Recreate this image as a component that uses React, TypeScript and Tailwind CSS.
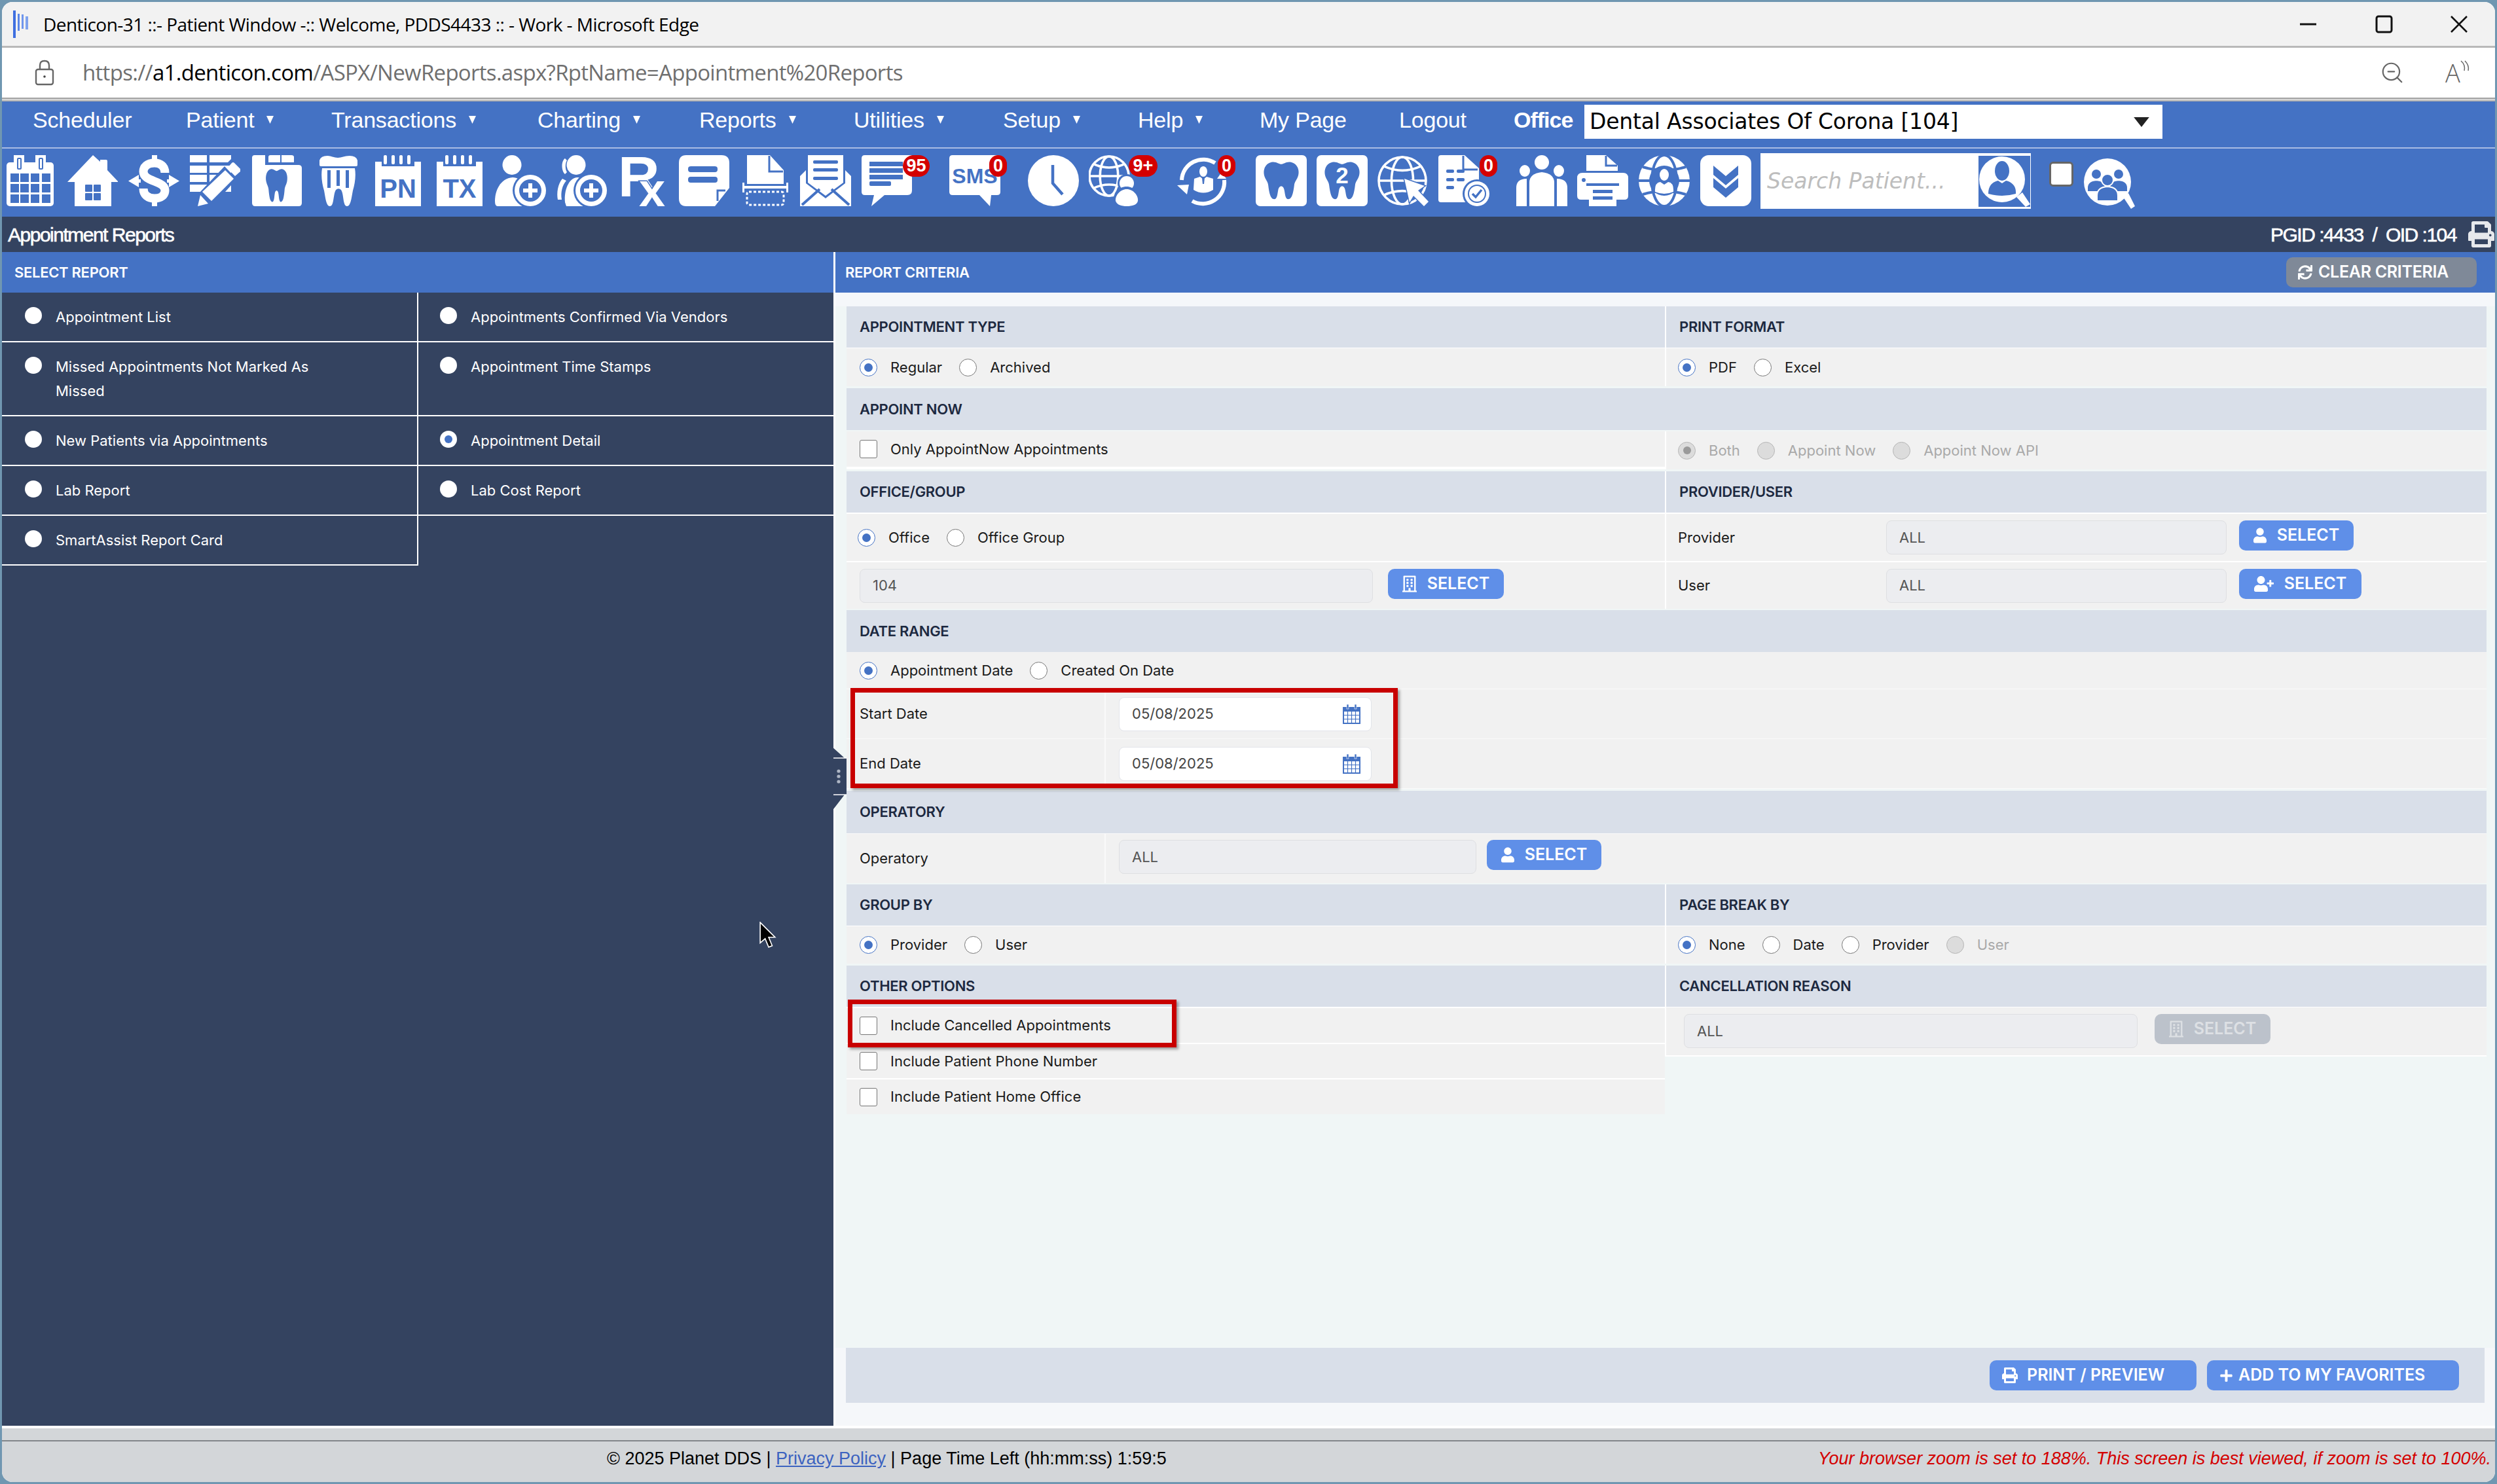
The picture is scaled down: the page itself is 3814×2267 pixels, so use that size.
import type { ReactNode } from "react";
import { FaPlus, FaPrint, FaRegBuilding, FaSync, FaUser, FaUserPlus } from "react-icons/fa";
import { ZoomOut } from "lucide-react";

const BLUE = "#4472c4";

const TOOTH =
  "M25 3C36 0 44 8 50 8C56 8 64 0 75 3C92 7 97 24 93 38C90 48 84 52 83 62C81 78 78 97 68 97C60 97 60 85 58 75C57 68 54 64 50 64C46 64 43 68 42 75C40 85 40 97 32 97C22 97 19 78 17 62C16 52 10 48 7 38C3 24 8 7 25 3Z";

function Ico({ children, className = "" }: { children: ReactNode; className?: string }) {
  return (
    <svg viewBox="0 0 78 78" fill="#fff" className={`w-[78px] h-[78px] ${className}`}>
      {children}
    </svg>
  );
}

function Globe({ cx, cy, r }: { cx: number; cy: number; r: number }) {
  return (
    <g fill="none" stroke="#fff" strokeWidth={3.6}>
      <circle cx={cx} cy={cy} r={r} />
      <ellipse cx={cx} cy={cy} rx={r * 0.46} ry={r} />
      <path d={`M${cx - r} ${cy}H${cx + r}`} />
      <path d={`M${cx - r * 0.8} ${cy - r * 0.62}Q${cx} ${cy - r * 0.25} ${cx + r * 0.8} ${cy - r * 0.62}`} />
      <path d={`M${cx - r * 0.8} ${cy + r * 0.62}Q${cx} ${cy + r * 0.25} ${cx + r * 0.8} ${cy + r * 0.62}`} />
    </g>
  );
}

function CalendarIcon() {
  const cols = [9, 24, 40, 57];
  const rows = [28, 44, 60];
  return (
    <Ico>
      <rect x="3" y="11" width="72" height="67" rx="5" />
      <rect x="14" y="0" width="16" height="15" />
      <rect x="47" y="0" width="16" height="15" />
      <rect x="19" y="4" width="7" height="18" rx="2" fill={BLUE} />
      <rect x="21" y="6" width="3" height="14" fill="#fff" />
      <rect x="52" y="4" width="7" height="18" rx="2" fill={BLUE} />
      <rect x="54" y="6" width="3" height="14" fill="#fff" />
      {rows.map((y) => cols.map((x) => <rect key={`${x}-${y}`} x={x} y={y} width="13" height="13" fill={BLUE} />))}
    </Ico>
  );
}

function HomeIcon() {
  return (
    <Ico>
      <path d="M40 0L51 10V7Q51 7 53 7H60Q62 7 62 9V23L79 41H68V78H12V41H1Z" />
      <g fill={BLUE}>
        <rect x="28" y="45" width="11" height="11" rx="1" />
        <rect x="41" y="45" width="11" height="11" rx="1" />
        <rect x="28" y="58" width="11" height="11" rx="1" />
        <rect x="41" y="58" width="11" height="11" rx="1" />
      </g>
    </Ico>
  );
}

function DollarIcon() {
  return (
    <Ico>
      <rect x="36" y="0" width="8" height="12" />
      <rect x="36" y="66" width="8" height="12" />
      <path
        d="M56 27C56 17 49 12 40 12C29 12 23 18 23 25C23 33 30 36 40 40C50 44 56 47 56 54C56 61 50 66 40 66C30 66 23 61 23 51"
        fill="none"
        stroke="#fff"
        strokeWidth={13}
      />
      <path d="M0 39.5L16 30V37H19V42H16V49Z" />
      <path d="M78 39.5L62 30V37H59V42H62V49Z" />
    </Ico>
  );
}

function LedgerIcon() {
  return (
    <Ico>
      <rect x="1" y="0" width="26" height="11" />
      <rect x="1" y="16" width="26" height="11" />
      <rect x="1" y="30" width="26" height="11" />
      <rect x="1" y="45" width="26" height="11" />
      <path d="M31 0H64V6L59 11H31Z" />
      <rect x="31" y="16" width="33" height="11" />
      <rect x="31" y="30" width="33" height="11" />
      <path d="M55 56L64 46V56Z" />
      <path d="M10 78L15 58L54 17L72 36L34 75Z" fill={BLUE} />
      <path d="M20 56L55 23L68 36L34 70Z" />
      <path d="M17 61L29 74L13 78Z" />
      <path d="M58 20L65 12Q67 10 69 12L78 21Q80 23 78 25L70 32Z" />
    </Ico>
  );
}

function ChartToothIcon() {
  return (
    <Ico>
      <path d="M6 0H22V15H73Q78 15 78 20V73Q78 78 73 78H7Q2 78 2 73V4Q2 0 6 0Z" />
      <path d="M30 0H45V11H27V3Q27 0 30 0Z" />
      <path d="M47 0H62Q66 0 66 3V11H47Z" />
      <path d={TOOTH} fill={BLUE} transform="translate(21 20) scale(.37 .53)" />
    </Ico>
  );
}

function RootCanalIcon() {
  return (
    <Ico>
      <path d="M12 8Q14 1 24 1C30 1 34 4 40 4C46 4 50 1 58 1Q68 1 70 8V15Q70 17 68 17H14Q12 17 12 15Z" />
      <path d="M16 20H66C68 32 66 44 63 54C61 64 60 78 54 78C48 78 49 62 46 55C44 50 38 50 36 55C33 62 34 78 28 78C22 78 21 64 19 54C16 44 14 32 16 20Z" />
      <rect x="24" y="23" width="5" height="27" fill={BLUE} />
      <rect x="38" y="23" width="5" height="24" fill={BLUE} />
      <rect x="52" y="23" width="5" height="27" fill={BLUE} />
    </Ico>
  );
}

function NotepadIcon({ label }: { label: string }) {
  return (
    <Ico>
      <path d="M7 10H74V78H4V10Z" />
      <rect x="14" y="0" width="50" height="17" fill={BLUE} />
      {[17, 29, 41, 53].map((x) => (
        <rect key={x} x={x} y="0" width="5" height="14" rx="2" />
      ))}
      <text x="39" y="65" textAnchor="middle" fontFamily="Liberation Sans" fontWeight="700" fontSize="40" fill={BLUE}>
        {label}
      </text>
    </Ico>
  );
}

function AddPatientIcon({ pair = false }: { pair?: boolean }) {
  return (
    <Ico>
      {pair && <path d="M14 5C8 9 8 24 14 29L17 26C14 22 14 12 17 8Z" />}
      <ellipse cx={pair ? 31 : 26} cy="15" rx="14.5" ry="15" />
      <path d={pair ? "M10 36C3 44 1 58 3 68H9C7 56 10 46 16 39Z" : "M0 70C0 52 10 35 27 34C34 34 40 38 44 44L44 78H4Q0 78 0 70Z"} />
      {pair && <path d="M14 72C12 54 20 34 33 34C40 34 44 38 46 44V78H16Z" />}
      <circle cx="54" cy="54" r="27" fill={BLUE} />
      <circle cx="54" cy="54" r="24" />
      <circle cx="54" cy="54" r="17" fill={BLUE} />
      <rect x="51" y="43" width="6" height="22" />
      <rect x="43" y="51" width="22" height="6" />
    </Ico>
  );
}

function RxIcon() {
  return (
    <Ico>
      <text x="1" y="63" fontFamily="Liberation Sans" fontWeight="700" fontSize="88" fill="#fff">
        R
      </text>
      <text
        x="33"
        y="78"
        fontFamily="Liberation Sans"
        fontWeight="700"
        fontSize="72"
        fill="#fff"
        stroke={BLUE}
        strokeWidth="3"
        paintOrder="stroke"
      >
        x
      </text>
    </Ico>
  );
}

function NoteIcon() {
  return (
    <Ico>
      <path d="M12 0H66Q78 0 78 12V50L56 78H12Q1 78 1 66V12Q1 0 12 0Z" />
      <rect x="15" y="17" width="45" height="9" rx="4" fill={BLUE} />
      <rect x="15" y="33" width="45" height="9" rx="4" fill={BLUE} />
      <path d="M72 54H60V70" fill="none" stroke={BLUE} strokeWidth="3" />
    </Ico>
  );
}

function PrintPreviewIcon() {
  return (
    <Ico>
      <path d="M12 0H47L68 23V44H12Z" />
      <path d="M46 1V25H67" fill="none" stroke={BLUE} strokeWidth="3" />
      <rect x="5" y="47" width="70" height="4" />
      <rect x="5" y="42" width="3" height="15" />
      <rect x="72" y="42" width="3" height="15" />
      <rect x="12" y="56" width="56" height="20" rx="3" fill="none" stroke="#fff" strokeWidth="3" strokeDasharray="4 3" />
    </Ico>
  );
}

function MailIcon() {
  return (
    <Ico>
      <path d="M12 0H66V42L39 62L12 42Z" />
      <rect x="20" y="8" width="38" height="5" rx="2" fill={BLUE} />
      <rect x="20" y="20" width="38" height="5" rx="2" fill={BLUE} />
      <rect x="20" y="33" width="38" height="5" rx="2" fill={BLUE} />
      <path d="M0 32L9 23V43L39 66L69 43V23L78 32V78H0Z" />
      <path d="M3 76L30 52M75 76L48 52" stroke={BLUE} strokeWidth="4" fill="none" />
    </Ico>
  );
}

function ChatIcon() {
  return (
    <Ico>
      <path d="M6 0H78V54Q78 61 71 61H36L16 78L20 61H6Q1 61 1 56V5Q1 0 6 0Z" />
      <rect x="13" y="10" width="51" height="7" fill={BLUE} />
      <rect x="13" y="20" width="51" height="7" fill={BLUE} />
      <rect x="13" y="30" width="51" height="7" fill={BLUE} />
      <rect x="13" y="40" width="33" height="7" rx="2" fill={BLUE} />
    </Ico>
  );
}

function SmsIcon() {
  return (
    <Ico>
      <path d="M5 0H73Q78 0 78 5V56Q78 61 73 61H64L62 78L46 61H5Q0 61 0 56V5Q0 0 5 0Z" />
      <text x="39" y="43" textAnchor="middle" fontFamily="Liberation Sans" fontWeight="700" fontSize="32" fill={BLUE}>
        SMS
      </text>
    </Ico>
  );
}

function ClockIcon() {
  return (
    <Ico>
      <circle cx="39" cy="39" r="39" />
      <path d="M38 15V43L53 60" fill="none" stroke={BLUE} strokeWidth="4.5" />
    </Ico>
  );
}

function GlobePersonIcon() {
  return (
    <Ico>
      <Globe cx={31} cy={32} r={30} />
      <circle cx="58" cy="43" r="14" fill={BLUE} />
      <circle cx="58" cy="43" r="11" />
      <path d="M58 48C44 48 36 60 38 72Q42 81 58 78Q74 80 77 70C79 60 70 48 58 48Z" fill={BLUE} />
      <path d="M58 52C48 52 40 62 41 70C43 76 50 78 58 78C66 78 74 76 75 70C76 62 68 52 58 52Z" />
    </Ico>
  );
}

function CycleIcon() {
  return (
    <Ico>
      <g fill="none" stroke="#fff" strokeWidth="6">
        <path d="M58 12A33 33 0 0 0 7 38" />
        <path d="M23 70A33 33 0 0 0 72 38" />
      </g>
      <path d="M0 46L18 45L15 60Z" />
      <path d="M61 36H75L68 26Z" />
      <ellipse cx="40" cy="25" rx="6" ry="8" />
      <path d="M26 36L35 33L40 37L45 33L55 36V53Q40 62 25 53Z" />
      <path d="M38 35H42L41 44H39Z" fill={BLUE} />
    </Ico>
  );
}

function ToothSquareIcon({ number }: { number?: string }) {
  return (
    <Ico>
      <rect x="0" y="0" width="78" height="78" rx="7" />
      <path d={TOOTH} fill={BLUE} transform="translate(9 9) scale(.6 .6)" />
      {number && (
        <text x="39" y="43" textAnchor="middle" fontFamily="Liberation Sans" fontWeight="700" fontSize="35" fill="#fff">
          {number}
        </text>
      )}
    </Ico>
  );
}

function GlobeCursorIcon() {
  return (
    <Ico>
      <Globe cx={38} cy={39} r={36} />
      <path
        d="M41 36L72 47L62 54L78 71L71 78L55 62L49 72Z"
        fill="#fff"
        stroke={BLUE}
        strokeWidth="3"
        paintOrder="stroke"
      />
    </Ico>
  );
}

function DocCheckIcon() {
  return (
    <Ico>
      <path d="M4 0H40L62 20V72H4Q0 72 0 68V4Q0 0 4 0Z" />
      <path d="M38 1V22H60" fill="none" stroke={BLUE} strokeWidth="3" />
      <g fill={BLUE}>
        <rect x="12" y="22" width="12" height="5" rx="2" />
        <rect x="28" y="22" width="12" height="5" rx="2" />
        <rect x="12" y="35" width="12" height="5" rx="2" />
        <rect x="28" y="35" width="12" height="5" rx="2" />
        <rect x="12" y="47" width="12" height="5" rx="2" />
      </g>
      <circle cx="59" cy="59" r="22" fill={BLUE} />
      <circle cx="59" cy="59" r="19" />
      <circle cx="59" cy="59" r="14" fill={BLUE} />
      <circle cx="59" cy="59" r="12" />
      <path d="M52 59L57 64L66 53" fill="none" stroke={BLUE} strokeWidth="3.5" />
    </Ico>
  );
}

function PeopleIcon() {
  return (
    <Ico>
      <ellipse cx="39" cy="11" rx="11" ry="11" />
      <ellipse cx="13" cy="24" rx="8" ry="9" />
      <ellipse cx="65" cy="24" rx="8" ry="9" />
      <path d="M20 42Q20 28 39 26Q58 28 58 42V78H20Z" />
      <path d="M16 36Q0 36 0 50V78H16Z" />
      <path d="M62 36Q78 36 78 50V78H62Z" />
    </Ico>
  );
}

function PrinterIcon() {
  return (
    <Ico>
      <path d="M14 0H44L62 16V24H14Z" />
      <path d="M44 1V16H61" fill="none" stroke={BLUE} strokeWidth="3" />
      <path d="M8 27H70Q78 27 78 35V62Q78 68 72 68H60V50H18V68H6Q0 68 0 62V35Q0 27 8 27Z" />
      <circle cx="10" cy="38" r="3" fill={BLUE} />
      <path d="M18 47H60V78H18Z" />
      <rect x="14" y="43" width="50" height="4" fill={BLUE} />
      <rect x="24" y="53" width="30" height="5" fill={BLUE} />
      <rect x="24" y="63" width="30" height="5" fill={BLUE} />
    </Ico>
  );
}

function GlobeBadgeIcon() {
  return (
    <Ico>
      <circle cx="39" cy="39" r="39" />
      <g fill="none" stroke={BLUE} strokeWidth="4">
        <ellipse cx="39" cy="39" rx="19" ry="39" />
        <path d="M0 39H78M6 18Q39 28 72 18M6 60Q39 50 72 60" />
      </g>
      <circle cx="39" cy="39" r="23" fill={BLUE} />
      <ellipse cx="39" cy="30" rx="7" ry="9" />
      <path d="M25 56Q24 42 33 41L39 45L45 41Q54 42 53 56Q39 62 25 56Z" />
    </Ico>
  );
}

function ChevronsIcon() {
  return (
    <svg viewBox="0 0 78 78" className="w-[78px] h-[78px]">
      <rect x="0" y="0" width="78" height="78" rx="13" fill="#fff" />
      <path d="M20 16L39 32L58 16V30L39 46L20 30ZM20 35L39 51L58 35V49L39 65L20 49Z" fill={BLUE} />
    </svg>
  );
}

function SearchPersonIcon() {
  return (
    <svg viewBox="0 0 78 78" className="w-[78px] h-[78px]" fill="#fff">
      <path d="M57 63L66 56L78 74L71 78Z" />
      <circle cx="35" cy="36" r="35" />
      <ellipse cx="35" cy="23" rx="11" ry="15" fill={BLUE} />
      <path d="M14 58C14 45 21 40 29 38L35 42L41 38C50 40 57 46 56 58Q35 64 14 58Z" fill={BLUE} />
    </svg>
  );
}

function SearchGroupIcon() {
  return (
    <svg viewBox="0 0 78 78" className="w-[78px] h-[78px]" fill="#fff">
      <path d="M60 60L68 54L78 74L72 78Z" />
      <circle cx="36" cy="37" r="36" />
      <g fill={BLUE} stroke="#fff" strokeWidth="2">
        <circle cx="19" cy="25" r="8" />
        <circle cx="53" cy="25" r="8" />
        <path d="M5 46Q5 35 19 34Q33 35 33 46V52H5Z" />
        <path d="M39 46Q39 35 53 34Q67 35 67 46V52H39Z" />
        <circle cx="36" cy="34" r="9" />
        <path d="M20 58Q20 45 36 44Q52 45 52 58V66H20Z" />
      </g>
    </svg>
  );
}

function ToolSlot({
  children,
  className = "",
  badge,
  badgeClass = "",
}: {
  children: ReactNode;
  className?: string;
  badge?: string;
  badgeClass?: string;
}) {
  return (
    <div className={`relative w-[78px] h-[78px] shrink-0 ${className}`}>
      {children}
      {badge && (
        <span
          className={`absolute top-0 h-[33px] rounded-full bg-[#d40000] text-white font-bold text-[27px] leading-[33px] text-center font-['Liberation_Sans',sans-serif] ${badgeClass}`}
        >
          {badge}
        </span>
      )}
    </div>
  );
}

function Caret() {
  return (
    <svg viewBox="0 0 11 12" className="w-[11px] h-[12px] ml-[19px]">
      <path d="M0 0H11L5.5 12Z" fill="#fff" />
    </svg>
  );
}

const navItems = [
  { label: "Scheduler", width: "w-[234px]" },
  { label: "Patient", width: "w-[222px]", caret: true },
  { label: "Transactions", width: "w-[315px]", caret: true },
  { label: "Charting", width: "w-[247px]", caret: true },
  { label: "Reports", width: "w-[236px]", caret: true },
  { label: "Utilities", width: "w-[228px]", caret: true },
  { label: "Setup", width: "w-[206px]", caret: true },
  { label: "Help", width: "w-[186px]", caret: true },
  { label: "My Page", width: "w-[213px]" },
  { label: "Logout", width: "w-[175px]" },
];

function SectionHead({ title, className = "" }: { title?: string; className?: string }) {
  return (
    <div
      className={`flex items-center pl-[20px] bg-[#d9dfe9] text-[#1d2940] text-[22px] font-semibold tracking-[-0.3px] ${className}`}
    >
      {title}
    </div>
  );
}

function Radio({ checked, disabled }: { checked?: boolean; disabled?: boolean }) {
  if (disabled) {
    return (
      <span className="flex items-center justify-center w-[27px] h-[27px] shrink-0 rounded-full bg-[#dcdcdc] border border-[#b5b5b5]">
        {checked && <span className="w-[12px] h-[12px] rounded-full bg-[#9a9a9a]" />}
      </span>
    );
  }
  return (
    <span
      className={`flex items-center justify-center w-[27px] h-[27px] shrink-0 rounded-full bg-white border ${
        checked ? "border-[#4472c4]" : "border-[#767676]"
      }`}
    >
      {checked && <span className="w-[13px] h-[13px] rounded-full bg-[#4472c4]" />}
    </span>
  );
}

function RadioOpt({
  label,
  checked,
  disabled,
  gap = "mr-[26px]",
}: {
  label: string;
  checked?: boolean;
  disabled?: boolean;
  gap?: string;
}) {
  return (
    <span className={`flex items-center ${gap}`}>
      <Radio checked={checked} disabled={disabled} />
      <span className={`ml-[20px] ${disabled ? "text-[#a9a9a9]" : "text-[#1a1a1a]"}`}>{label}</span>
    </span>
  );
}

function Check({ label }: { label: string }) {
  return (
    <span className="flex items-center">
      <span className="w-[27px] h-[28px] shrink-0 rounded-[3px] bg-white border border-[#767676]" />
      <span className="ml-[20px] text-[#1a1a1a]">{label}</span>
    </span>
  );
}

function ReadOnlyBox({ value, className = "" }: { value: string; className?: string }) {
  return (
    <div
      className={`flex items-center pl-[19px] rounded-[8px] bg-[#ecedf0] border border-[#dedfe2] text-[#555] ${className}`}
    >
      {value}
    </div>
  );
}

function SelectBtn({
  icon,
  className = "",
  disabled,
}: {
  icon: ReactNode;
  className?: string;
  disabled?: boolean;
}) {
  return (
    <button
      className={`flex items-center justify-center gap-[16px] h-[46px] rounded-[10px] font-semibold text-[25px] ${
        disabled ? "bg-[#bcc2cb] text-[#dde0e4]" : "bg-[#5f8fe8] text-white"
      } ${className}`}
    >
      {icon}
      SELECT
    </button>
  );
}

function SmallCalendar() {
  return (
    <svg viewBox="0 0 29 30" className="w-[29px] h-[30px] shrink-0">
      <path d="M1 4H28V30H1Z" fill="#4472c4" />
      <rect x="7" y="0" width="3" height="7" fill="#4472c4" stroke="#fff" strokeWidth=".6" />
      <rect x="19" y="0" width="3" height="7" fill="#4472c4" stroke="#fff" strokeWidth=".6" />
      <path d="M3 11H26V28H3Z" fill="#fff" />
      <path d="M8.5 11V28M14.5 11V28M20.5 11V28M3 16.5H26M3 22.5H26" stroke="#4472c4" strokeWidth="1.2" />
    </svg>
  );
}

function DateRow({ label, className = "" }: { label: string; className?: string }) {
  return (
    <div className={`flex h-[76px] bg-[#f1f1f1] border-b border-[#fafafa] ${className}`}>
      <div className="flex items-center pl-[20px] w-[396px] border-r-2 border-[#fafafa] text-[#1a1a1a]">{label}</div>
      <div className="flex items-center pl-[20px]">
        <div className="flex items-center justify-between w-[386px] h-[52px] pl-[19px] pr-[15px] rounded-[8px] bg-white border border-[#e2e4ea] text-[#444]">
          05/08/2025
          <SmallCalendar />
        </div>
      </div>
    </div>
  );
}

const reports = [
  [
    { label: "Appointment List" },
    { label: "Appointments Confirmed Via Vendors" },
  ],
  [
    { label: "Missed Appointments Not Marked As Missed" },
    { label: "Appointment Time Stamps" },
  ],
  [
    { label: "New Patients via Appointments" },
    { label: "Appointment Detail", checked: true },
  ],
  [{ label: "Lab Report" }, { label: "Lab Cost Report" }],
  [{ label: "SmartAssist Report Card" }],
];

function ReportCell({ label, checked, right }: { label: string; checked?: boolean; right?: boolean }) {
  return (
    <div className={`flex items-start pt-[19px] border-b-2 border-white ${right ? "pl-[33px]" : "pl-[35px] border-r-2"}`}>
      <span className="flex items-center justify-center mt-[3px] w-[26px] h-[26px] shrink-0 rounded-full bg-white">
        {checked && <span className="w-[12px] h-[12px] rounded-full bg-[#4472c4]" />}
      </span>
      <span className="ml-[21px] w-[450px] leading-[37px] text-white">{label}</span>
    </div>
  );
}

function ReportList() {
  const heights = ["h-[76px]", "h-[113px]", "h-[76px]", "h-[76px]", "h-[76px]"];
  return (
    <div className="flex flex-col text-[22px]">
      {reports.map((row, i) => (
        <div key={i} className={`grid grid-cols-[636px_634px] ${heights[i]}`}>
          {row.map((r, j) => (
            <ReportCell key={r.label} label={r.label} checked={"checked" in r ? r.checked : false} right={j === 1} />
          ))}
        </div>
      ))}
    </div>
  );
}

function CriteriaForm() {
  return (
    <div className="flex-1 pt-[21px] pl-[17px] pr-[13px] bg-[linear-gradient(#f5f7fa_0,#f5f7fa_21px,#f0f6f6_21px)]">
      <div className="text-[22px]">
        <div className="grid grid-cols-[1250px_1255px] gap-y-[1px] bg-white">
          <SectionHead title="APPOINTMENT TYPE" className="h-[63px]" />
          <SectionHead title="PRINT FORMAT" className="h-[63px] border-l-2 border-white" />
          <div className="flex items-center pl-[20px] h-[58px] bg-[#f1f1f1]">
            <RadioOpt label="Regular" checked />
            <RadioOpt label="Archived" />
          </div>
          <div className="flex items-center pl-[18px] h-[58px] bg-[#f1f1f1] border-l-2 border-white">
            <RadioOpt label="PDF" checked />
            <RadioOpt label="Excel" />
          </div>
        </div>
        <SectionHead title="APPOINT NOW" className="mt-[3px] h-[64px]" />
        <div className="grid grid-cols-[1250px_1255px] mt-[2px] bg-white">
          <div className="flex items-center pl-[20px] h-[54px] bg-[#f1f1f1]">
            <Check label="Only AppointNow Appointments" />
          </div>
          <div className="flex items-center pl-[18px] h-[58px] bg-[#f1f1f1] border-l-2 border-white">
            <RadioOpt label="Both" checked disabled />
            <RadioOpt label="Appoint Now" disabled />
            <RadioOpt label="Appoint Now API" disabled />
          </div>
        </div>
        <div className="grid grid-cols-[1250px_1255px] gap-y-[2px] mt-[3px] bg-white">
          <SectionHead title="OFFICE/GROUP" className="h-[63px]" />
          <SectionHead title="PROVIDER/USER" className="h-[63px] border-l-2 border-white" />
          <div className="flex items-center pl-[17px] h-[72px] bg-[#f1f1f1]">
            <RadioOpt label="Office" checked />
            <RadioOpt label="Office Group" />
          </div>
          <div className="flex items-center pl-[18px] h-[72px] bg-[#f1f1f1] border-l-2 border-white">
            <span className="w-[318px] text-[#1a1a1a]">Provider</span>
            <ReadOnlyBox value="ALL" className="w-[520px] h-[52px]" />
            <SelectBtn icon={<FaUser className="w-[20px] h-[24px]" />} className="ml-[19px] w-[175px] -mt-[6px]" />
          </div>
          <div className="flex items-center pl-[20px] h-[71px] bg-[#f1f1f1]">
            <ReadOnlyBox value="104" className="w-[784px] h-[52px]" />
            <SelectBtn icon={<FaRegBuilding className="w-[22px] h-[28px]" />} className="ml-[23px] w-[177px] -mt-[6px]" />
          </div>
          <div className="flex items-center pl-[18px] h-[71px] bg-[#f1f1f1] border-l-2 border-white">
            <span className="w-[318px] text-[#1a1a1a]">User</span>
            <ReadOnlyBox value="ALL" className="w-[520px] h-[52px]" />
            <SelectBtn icon={<FaUserPlus className="w-[30px] h-[24px]" />} className="ml-[19px] w-[187px] -mt-[6px]" />
          </div>
        </div>
        <SectionHead title="DATE RANGE" className="mt-[2px] h-[64px]" />
        <div className="flex items-center pl-[20px] h-[57px] bg-[#f1f1f1] border-b border-[#fafafa]">
          <RadioOpt label="Appointment Date" checked />
          <RadioOpt label="Created On Date" />
        </div>
        <DateRow label="Start Date" />
        <DateRow label="End Date" />
        <SectionHead title="OPERATORY" className="mt-[3px] h-[65px]" />
        <div className="flex h-[76px] bg-[#f1f1f1] border-t border-[#fafafa]">
          <div className="flex items-center pl-[20px] w-[396px] border-r-2 border-[#fafafa] text-[#1a1a1a]">Operatory</div>
          <div className="flex items-start pl-[20px] pt-[9px]">
            <ReadOnlyBox value="ALL" className="w-[546px] h-[52px]" />
            <SelectBtn icon={<FaUser className="w-[20px] h-[24px]" />} className="ml-[16px] w-[175px]" />
          </div>
        </div>
        <div className="grid grid-cols-[1250px_1255px] gap-y-[1px] mt-[2px] bg-white">
          <SectionHead title="GROUP BY" className="h-[63px]" />
          <SectionHead title="PAGE BREAK BY" className="h-[63px] border-l-2 border-white" />
          <div className="flex items-center pl-[20px] h-[57px] bg-[#f1f1f1]">
            <RadioOpt label="Provider" checked />
            <RadioOpt label="User" />
          </div>
          <div className="flex items-center pl-[18px] h-[57px] bg-[#f1f1f1] border-l-2 border-white">
            <RadioOpt label="None" checked />
            <RadioOpt label="Date" />
            <RadioOpt label="Provider" />
            <RadioOpt label="User" disabled />
          </div>
        </div>
        <div className="grid grid-cols-[1250px_1255px] items-start mt-[3px]">
          <div className="flex flex-col bg-white">
            <SectionHead title="OTHER OPTIONS" className="h-[63px]" />
            <div className="flex items-center pl-[20px] h-[53px] mt-[2px] bg-[#f1f1f1]">
              <Check label="Include Cancelled Appointments" />
            </div>
            <div className="flex items-center pl-[20px] h-[52px] mt-[2px] bg-[#f1f1f1]">
              <Check label="Include Patient Phone Number" />
            </div>
            <div className="flex items-center pl-[20px] h-[53px] mt-[2px] bg-[#f1f1f1]">
              <Check label="Include Patient Home Office" />
            </div>
          </div>
          <div className="flex flex-col bg-white border-l-2 border-white">
            <SectionHead title="CANCELLATION REASON" className="h-[63px]" />
            <div className="flex items-start pl-[27px] pt-[10px] h-[73px] mt-[1px] bg-[#f1f1f1]">
              <ReadOnlyBox value="ALL" className="w-[693px] h-[52px]" />
              <SelectBtn
                disabled
                icon={<FaRegBuilding className="w-[22px] h-[28px]" />}
                className="ml-[26px] w-[177px]"
              />
            </div>
            <div className="h-[2px] bg-white" />
          </div>
        </div>
      </div>
    </div>
  );
}

export default function App() {
  return (
    <div className="relative w-[3814px] h-[2267px] p-[3px] bg-[#7097b1] overflow-hidden font-['Inter',sans-serif]">
      <div className="flex flex-col h-full rounded-[16px] overflow-hidden bg-white">
        {/* browser chrome */}
        <div className="flex items-center h-[67px] shrink-0 bg-[#f2f2f2] border-0">
          <svg viewBox="0 0 28 42" className="ml-[16px] w-[28px] h-[42px]">
            <rect x="1" y="0" width="4" height="42" fill="#3f6fe0" />
            <rect x="8" y="5" width="3" height="26" fill="#5a86e8" />
            <rect x="14" y="6" width="3" height="22" fill="#6f96ec" />
            <rect x="20" y="9" width="4" height="20" fill="#7fa3ee" />
          </svg>
          <span className="ml-[19px] text-[28px] tracking-[-0.55px] text-black font-['Open_Sans',sans-serif]">
            Denticon-31 ::- Patient Window -:: Welcome, PDDS4433 :: - Work - Microsoft Edge
          </span>
          <div className="flex items-center ml-auto mr-[40px] gap-[85px]">
            <svg viewBox="0 0 30 30" className="w-[30px] h-[30px]">
              <path d="M2 15H27" stroke="#111" strokeWidth="3" />
            </svg>
            <svg viewBox="0 0 30 30" className="w-[30px] h-[30px]">
              <rect x="4" y="3" width="23" height="24" rx="3" fill="none" stroke="#111" strokeWidth="3" />
            </svg>
            <svg viewBox="0 0 30 30" className="w-[30px] h-[30px]">
              <path d="M3 3L27 27M27 3L3 27" stroke="#111" strokeWidth="2.6" />
            </svg>
          </div>
        </div>
        <div className="h-[3px] shrink-0 bg-[#b9b9b9]" />
        <div className="flex items-center h-[76px] shrink-0 bg-white">
          <svg viewBox="0 0 30 40" className="ml-[50px] w-[30px] h-[40px]">
            <path d="M8 16V9Q8 2 15 2Q22 2 22 9V16" fill="none" stroke="#666" strokeWidth="2.4" />
            <rect x="2" y="15" width="26" height="23" rx="3" fill="none" stroke="#666" strokeWidth="2.4" />
            <circle cx="15" cy="26" r="1.8" fill="#444" />
          </svg>
          <span className="ml-[43px] text-[33px] tracking-[-0.7px] text-[#6f6f6f] font-['Open_Sans',sans-serif]">
            https://<span className="text-black">a1.denticon.com</span>/ASPX/NewReports.aspx?RptName=Appointment%20Reports
          </span>
          <div className="flex items-center ml-auto mr-[38px] gap-[62px] text-[#666]">
            <ZoomOut className="w-[38px] h-[38px]" strokeWidth={1.4} />
            <span className="relative w-[38px] h-[36px] text-[38px] leading-[36px] font-['Open_Sans',sans-serif] font-light">
              A
              <svg viewBox="0 0 16 18" className="absolute left-[22px] -top-[2px] w-[16px] h-[20px]">
                <path d="M2 1Q9 7 7 16M8 1Q15 8 13 16" fill="none" stroke="#666" strokeWidth="1.5" />
              </svg>
            </span>
          </div>
        </div>
        <div className="flex flex-col h-[6px] shrink-0">
          <div className="h-[3px] bg-[#adadad]" />
          <div className="h-[1px] bg-white" />
          <div className="h-[2px] bg-[#adadad]" />
        </div>

        {/* main nav */}
        <div className="flex items-start h-[72px] shrink-0 pl-[47px] pt-[5px] bg-[#4472c4] border-b-2 border-[#a9bce3] font-['Liberation_Sans',sans-serif] text-[34px] tracking-[-0.2px] text-white">
          {navItems.map((n) => (
            <div key={n.label} className={`flex items-center h-[46px] ${n.width}`}>
              {n.label}
              {n.caret && <Caret />}
            </div>
          ))}
          <div className="flex items-center h-[46px] w-[108px] font-bold tracking-[-1px]">Office</div>
          <div className="flex items-center justify-between w-[883px] h-[52px] pl-[8px] pr-[20px] bg-white text-black text-[33px] tracking-[-0.2px] font-['DejaVu_Sans',sans-serif]">
            Dental Associates Of Corona [104]
            <svg viewBox="0 0 22 14" className="w-[24px] h-[15px]">
              <path d="M0 0H22L11 14Z" fill="#222" />
            </svg>
          </div>
        </div>

        {/* icon toolbar */}
        <div className="flex items-start gap-[15px] h-[104px] shrink-0 pl-[4px] pt-[10px] bg-[#4472c4]">
          <ToolSlot><CalendarIcon /></ToolSlot>
          <ToolSlot className="ml-[2px]"><HomeIcon /></ToolSlot>
          <ToolSlot className="ml-[1px]"><DollarIcon /></ToolSlot>
          <ToolSlot><LedgerIcon /></ToolSlot>
          <ToolSlot className="ml-[1px]"><ChartToothIcon /></ToolSlot>
          <ToolSlot><RootCanalIcon /></ToolSlot>
          <ToolSlot><NotepadIcon label="PN" /></ToolSlot>
          <ToolSlot className="ml-[1px]"><NotepadIcon label="TX" /></ToolSlot>
          <ToolSlot><AddPatientIcon /></ToolSlot>
          <ToolSlot><AddPatientIcon pair /></ToolSlot>
          <ToolSlot className="ml-[1px]"><RxIcon /></ToolSlot>
          <ToolSlot><NoteIcon /></ToolSlot>
          <ToolSlot><PrintPreviewIcon /></ToolSlot>
          <ToolSlot><MailIcon /></ToolSlot>
          <ToolSlot badge="95" badgeClass="left-[64px] w-[41px]"><ChatIcon /></ToolSlot>
          <ToolSlot className="ml-[42px]" badge="0" badgeClass="left-[61px] w-[27px]"><SmsIcon /></ToolSlot>
          <ToolSlot className="ml-[27px]"><ClockIcon /></ToolSlot>
          <ToolSlot badge="9+" badgeClass="left-[61px] w-[44px]"><GlobePersonIcon /></ToolSlot>
          <ToolSlot className="ml-[42px]" badge="0" badgeClass="left-[62px] w-[27px]"><CycleIcon /></ToolSlot>
          <ToolSlot className="ml-[27px]"><ToothSquareIcon /></ToolSlot>
          <ToolSlot><ToothSquareIcon number="2" /></ToolSlot>
          <ToolSlot><GlobeCursorIcon /></ToolSlot>
          <ToolSlot badge="0" badgeClass="left-[63px] w-[27px]"><DocCheckIcon /></ToolSlot>
          <ToolSlot className="ml-[26px]"><PeopleIcon /></ToolSlot>
          <ToolSlot><PrinterIcon /></ToolSlot>
          <ToolSlot className="ml-[1px]"><GlobeBadgeIcon /></ToolSlot>
          <ToolSlot className="ml-[1px]"><ChevronsIcon /></ToolSlot>
          <div className="flex items-center justify-between w-[413px] h-[85px] -mt-[3px] -ml-[1px] pl-[10px] pr-[1px] bg-white">
            <span className="text-[33px] italic text-[#bdbdbd] font-['DejaVu_Sans',sans-serif]">Search Patient...</span>
            <span className="flex items-center justify-center w-[79px] h-[78px] bg-[#4472c4]">
              <SearchPersonIcon />
            </span>
          </div>
          <span className="w-[37px] h-[38px] mt-[10px] ml-[13px] rounded-[6px] bg-white border-[3px] border-[#666]" />
          <span className="mt-[4px] ml-[1px]">
            <SearchGroupIcon />
          </span>
        </div>

        {/* page title */}
        <div className="flex items-center justify-between h-[54px] shrink-0 pl-[9px] pr-[1px] bg-[#344360] text-white font-['Liberation_Sans',sans-serif] text-[30px] font-bold tracking-[-1.5px]">
          <span className="font-normal [-webkit-text-stroke:0.6px_#fff]">Appointment Reports</span>
          <span className="flex items-center font-normal [-webkit-text-stroke:0.6px_#fff]">
            PGID :4433 &nbsp;/&nbsp; OID :104
            <FaPrint className="ml-[18px] w-[40px] h-[40px] text-[#e6e8ec]" />
          </span>
        </div>

        {/* body */}
        <div className="flex h-[1793px] shrink-0">
          <div className="w-[1270px] bg-[#344360]">
            <div className="flex items-center h-[62px] pl-[19px] bg-[#4472c4] text-white text-[22px] font-semibold tracking-[-0.3px]">
              SELECT REPORT
            </div>
            <ReportList />
          </div>
          <div className="flex flex-col flex-1 ml-[3px] bg-[#f5f7fa]">
            <div className="flex items-center justify-between h-[62px] shrink-0 pl-[15px] pr-[28px] bg-[#4472c4] text-white text-[22px] font-semibold tracking-[-0.3px]">
              REPORT CRITERIA
              <button className="flex items-center gap-[9px] w-[291px] h-[46px] pl-[18px] rounded-[10px] bg-[#7f8998] text-[25px] font-semibold">
                <FaSync className="w-[22px] h-[22px]" />
                CLEAR CRITERIA
              </button>
            </div>
            <CriteriaForm />
            <div className="flex items-center justify-end gap-[16px] h-[84px] shrink-0 ml-[16px] mr-[16px] pr-[39px] bg-[#d9dfe9] text-white text-[25px] font-semibold">
              <button className="flex items-center gap-[14px] w-[316px] h-[46px] pl-[19px] rounded-[10px] bg-[#5f8fe8]">
                <FaPrint className="w-[24px] h-[24px]" />
                PRINT / PREVIEW
              </button>
              <button className="flex items-center gap-[8px] w-[385px] h-[46px] pl-[19px] rounded-[10px] bg-[#5f8fe8]">
                <FaPlus className="w-[21px] h-[21px]" />
                ADD TO MY FAVORITES
              </button>
            </div>
            <div className="h-[35px] shrink-0" />
          </div>
        </div>

        {/* footer */}
        <div className="h-[4px] shrink-0 bg-white" />
        <div className="flex-1 bg-[#d3d6d9] font-['Liberation_Sans',sans-serif] text-[27px]">
          <div className="mt-[9px] h-[2px] bg-[#82868a] relative top-[9px]" />
          <div className="flex items-start justify-between mt-[20px] pl-[924px] pr-[6px] leading-[30px] text-black">
            <span>
              © 2025 Planet DDS | <span className="underline text-[#3d63c0]">Privacy Policy</span> | Page Time Left (hh:mm:ss) 1:59:5
            </span>
            <span className="italic text-[#d40000]">
              Your browser zoom is set to 188%. This screen is best viewed, if zoom is set to 100%.
            </span>
          </div>
        </div>
      </div>

      {/* splitter handle */}
      <div className="absolute left-[1270px] top-[1140px] w-[23px] h-[100px]">
        <svg viewBox="0 0 23 100" className="w-[23px] h-[100px]">
          <path d="M0 0L20 18H23V74H20L0 100Z" fill="#344360" />
          <path d="M3 18H23M3 74H23" stroke="#fff" strokeWidth="1.5" />
          <circle cx="11" cy="38" r="2.6" fill="#aeb6c4" />
          <circle cx="11" cy="46" r="2.6" fill="#aeb6c4" />
          <circle cx="11" cy="54" r="2.6" fill="#aeb6c4" />
        </svg>
      </div>

      {/* red annotation boxes */}
      <div className="absolute left-[1299px] top-[1051px] w-[836px] h-[153px] border-[7px] border-[#c80000] shadow-[3px_3px_4px_rgba(0,0,0,.35)]" />
      <div className="absolute left-[1295px] top-[1527px] w-[502px] h-[73px] border-[7px] border-[#c80000] shadow-[3px_3px_4px_rgba(0,0,0,.35)]" />

      {/* mouse pointer */}
      <svg viewBox="0 0 24 38" className="absolute left-[1160px] top-[1408px] w-[26px] h-[41px]">
        <path d="M1 1V30L8 24L13 36L18 34L13 22H22Z" fill="#000" stroke="#fff" strokeWidth="1.5" />
      </svg>
    </div>
  );
}
